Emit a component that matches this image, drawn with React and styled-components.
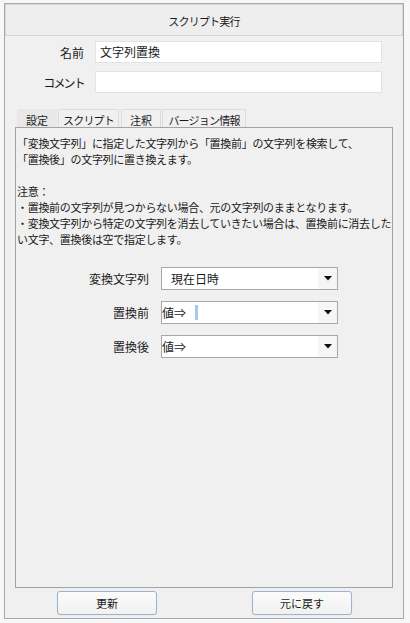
import styled, { createGlobalStyle } from "styled-components";

const GlobalStyle = createGlobalStyle`
  html, body {
    margin: 0;
    padding: 0;
    background: #f7f7f7;
  }
  body {
    font-family: "Noto Sans CJK JP", "Noto Sans", sans-serif;
    color: #1a1a1a;
  }
`;

const Window = styled.div`
  box-sizing: border-box;
  margin: 3px 0 0 4px;
  width: 400px;
  height: 616px;
  border: 1px solid #a9a9a9;
  background: #f0f0f0;
  display: flex;
  flex-direction: column;
`;

const TitleBar = styled.div`
  box-sizing: border-box;
  height: 32px;
  border: 1px solid #d6d6d6;
  background: #eeeeee;
  display: flex;
  align-items: center;
  justify-content: center;
  font-size: 11px;
  letter-spacing: -0.8px;
  padding-top: 1px;
`;

const Fields = styled.div`
  margin-top: 5px;
  display: grid;
  grid-template-columns: 79px 287px;
  column-gap: 11px;
  row-gap: 8px;
  align-items: center;
`;

const FieldLabel = styled.label`
  text-align: right;
  font-size: 12px;
  letter-spacing: ${(p) => (p.$narrow ? "-1.8px" : "0")};
`;

const TextInput = styled.div`
  box-sizing: border-box;
  height: 22px;
  background: #ffffff;
  border: 1px solid #e3e3e3;
  font-size: 12px;
  line-height: 20px;
  padding-left: 4px;
`;

const TabArea = styled.div`
  margin: 16px 0 0 10px;
  width: 378px;
  flex: 1;
  display: flex;
  flex-direction: column;
`;

const TabStrip = styled.div`
  display: flex;
  height: 18px;
  padding-left: 2px;
`;

const Tab = styled.div`
  box-sizing: border-box;
  width: ${(p) => p.$w}px;
  margin-right: ${(p) => p.$gap || 0}px;
  height: 18px;
  font-size: 11px;
  letter-spacing: ${(p) => (p.$kana ? "-0.8px" : "0")};
  line-height: 18px;
  text-align: center;
  background: ${(p) => (p.$active ? "#e8e8e8" : "#f0f0f0")};
  border: 1px solid ${(p) => (p.$active ? "#e8e8e8" : "#dcdcdc")};
  border-bottom: none;
  padding-top: 1px;
`;

const Panel = styled.div`
  box-sizing: border-box;
  flex: 1;
  border: 1px solid #a3a3a3;
  background: #f0f0f0;
  padding: 7px 0 0 1px;
  display: flex;
  flex-direction: column;
`;

const Description = styled.p`
  margin: 0;
  font-size: 11px;
  letter-spacing: -0.3px;
  line-height: 16px;
  white-space: nowrap;
`;

const Form = styled.div`
  margin-top: 20px;
  display: grid;
  grid-template-columns: 132px 177px;
  column-gap: 12px;
  row-gap: 11px;
  align-items: center;
`;

const FormLabel = styled.div`
  text-align: right;
  font-size: 12px;
`;

const Combo = styled.div`
  box-sizing: border-box;
  height: 23px;
  background: #ffffff;
  border: 1px solid #a8a8a8;
  display: flex;
  align-items: center;
  font-size: 12px;
`;

const ComboValue = styled.div`
  flex: 1;
  padding-left: ${(p) => p.$pad}px;
  display: flex;
  align-items: center;
  white-space: nowrap;
`;

const Arrow = styled.div`
  width: 19px;
  align-self: stretch;
  background: #f6f6f6;
  display: flex;
  align-items: center;
  justify-content: center;
`;

const Caret = styled.span`
  display: inline-block;
  width: 3px;
  height: 15px;
  margin-left: 9px;
  background: #a4cbee;
`;

const Buttons = styled.div`
  display: flex;
  padding: 3px 0 3px 52px;
  gap: 95px;
`;

const Button = styled.button`
  box-sizing: border-box;
  width: 100px;
  height: 24px;
  border: 1px solid #9fb3c8;
  border-radius: 3px;
  background: linear-gradient(#fbfbfb, #f1f1f1);
  box-shadow: 0 0 1px #c5d6e8;
  font-family: inherit;
  font-size: 11px;
  color: #1a1a1a;
  padding: 0;
`;

const DownArrow = () => (
  <svg width="8" height="5" viewBox="0 0 8 5">
    <polygon points="0,0 8,0 4,4.5" fill="#111" />
  </svg>
);

export default function App() {
  return (
    <>
      <GlobalStyle />
      <Window>
        <TitleBar>スクリプト実行</TitleBar>
        <Fields>
          <FieldLabel>名前</FieldLabel>
          <TextInput>文字列置換</TextInput>
          <FieldLabel $narrow>コメント</FieldLabel>
          <TextInput />
        </Fields>
        <TabArea>
          <TabStrip>
            <Tab $w={40} $gap={1} $active>設定</Tab>
            <Tab $w={61} $gap={2} $kana>スクリプト</Tab>
            <Tab $w={40} $gap={1}>注釈</Tab>
            <Tab $w={84} $kana>バージョン情報</Tab>
          </TabStrip>
          <Panel>
            <Description>
              「変換文字列」に指定した文字列から「置換前」の文字列を検索して、
              <br />
              「置換後」の文字列に置き換えます。
              <br />
              <br />
              注意：
              <br />
              ・置換前の文字列が見つからない場合、元の文字列のままとなります。
              <br />
              ・変換文字列から特定の文字列を消去していきたい場合は、置換前に消去した
              <br />
              い文字、置換後は空で指定します。
            </Description>
            <Form>
              <FormLabel>変換文字列</FormLabel>
              <Combo>
                <ComboValue $pad={9}>現在日時</ComboValue>
                <Arrow>
                  <DownArrow />
                </Arrow>
              </Combo>
              <FormLabel>置換前</FormLabel>
              <Combo>
                <ComboValue $pad={0}>
                  値⇒
                  <Caret />
                </ComboValue>
                <Arrow>
                  <DownArrow />
                </Arrow>
              </Combo>
              <FormLabel>置換後</FormLabel>
              <Combo>
                <ComboValue $pad={0}>値⇒</ComboValue>
                <Arrow>
                  <DownArrow />
                </Arrow>
              </Combo>
            </Form>
          </Panel>
        </TabArea>
        <Buttons>
          <Button>更新</Button>
          <Button>元に戻す</Button>
        </Buttons>
      </Window>
    </>
  );
}
